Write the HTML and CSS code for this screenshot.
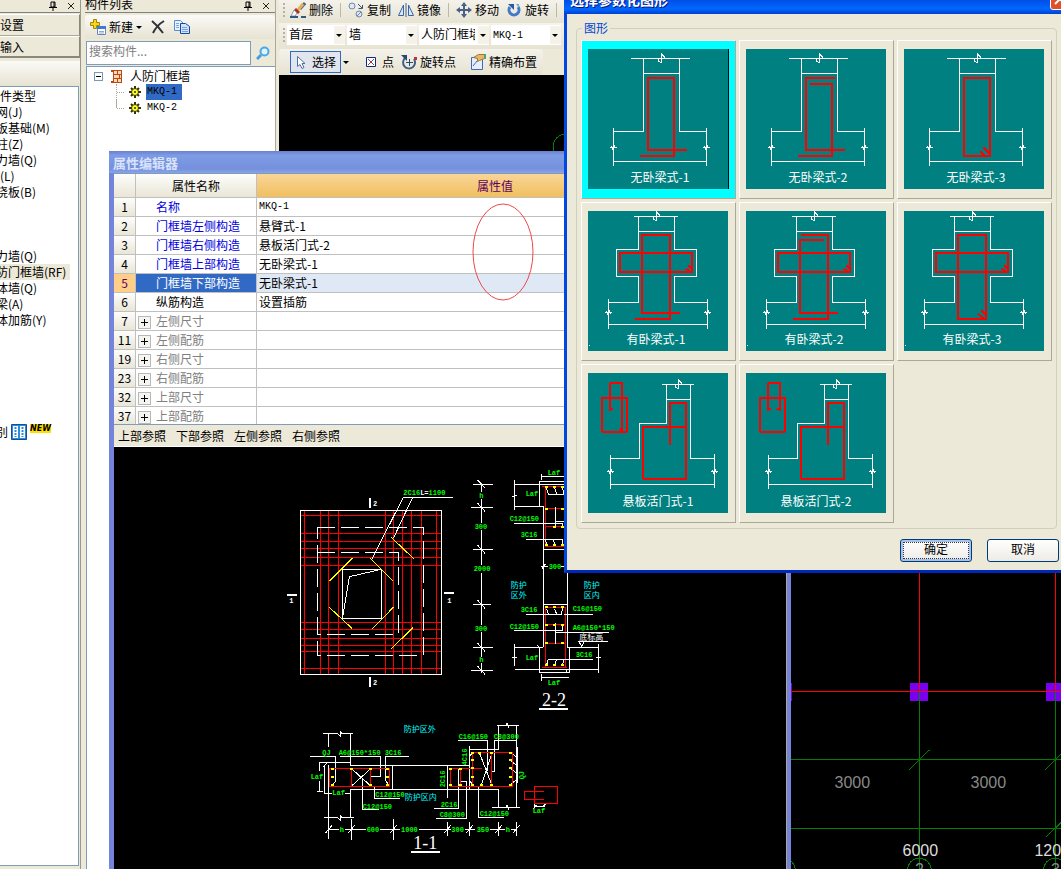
FILE: index.html
```
<!DOCTYPE html>
<html lang="zh-CN">
<head>
    <meta charset="UTF-8">
    <meta name="viewport" content="width=device-width, initial-scale=1.0">
    <title>属性编辑器</title>
    <link rel="stylesheet" href="styles.css">
</head>
<body>
    <!-- Shared symbols -->
    <svg class="defs" aria-hidden="true">
        <symbol id="pin" viewBox="0 0 8 10"><path d="M2 1H6V6H2ZM5 1V6M0 6.5H8M4 7V10" fill="none" stroke="#000"/></symbol>
        <symbol id="close" viewBox="0 0 8 8"><path d="M1 1L7 7M7 1L1 7" fill="none" stroke="#222"/></symbol>
        <symbol id="gear" viewBox="0 0 12 12">
            <path d="M6 0V12M0 6H12M2 2L10 10M10 2L2 10" stroke="#333300" stroke-width="2"/>
            <circle cx="6" cy="6" r="3.5" fill="#ffff20" stroke="#333300"/>
            <circle cx="6" cy="6" r="1" fill="#333300"/>
        </symbol>
        <!-- wall base without beam -->
        <symbol id="base-a" viewBox="0 0 420 420">
            <path class="w" d="M129 28H306M210 28V35L220 41V15L230 25V28M166 73H274M76 247H166V28M274 28V247H355M76 237V350M355 237V350M76 337H355M65 294H87M70 290L76 304M76 284L82 298M344 294H366M349 290L355 304M355 284L361 298"/>
        </symbol>
        <!-- wall base with beam -->
        <symbol id="base-b" viewBox="0 0 420 420">
            <path class="w" d="M138 16H269M195 16V23L205 29V3L215 13V16M152 61H259M61 274H152V197H86V116H152V16M259 16V116H325V197H259V274H358M61 264V353M358 264V353M61 340H358M50 304H72M55 300L61 314M61 294L67 308M347 304H369M352 300L358 314M358 294L364 308M3 403H6"/>
            <path class="r" d="M96 125H313V183H96ZM294 173L306 183M301 163L313 175"/>
        </symbol>
        <!-- hanging slab -->
        <symbol id="base-c" viewBox="0 0 420 420">
            <path class="w" d="M222 34H318M261 34V41L271 47V21L281 31V34M235 79H307M67 256H155V151H235V34M307 34V256H379M67 246V347M379 243V345M67 334H379M56 295H78M61 291L67 305M67 285L73 299M368 295H390M373 291L379 305M379 285L385 299"/>
            <path class="r" d="M42 75H117V176H42ZM165 161H295V317H165ZM246 216V89H295V161M66 30V111L75 107"/>
        </symbol>
    </svg>

    <div class="app">
        <!-- Component types -->
        <aside class="types">
            <div class="pane-title">
                <svg class="pin"><use href="#pin"/></svg>
                <svg class="close"><use href="#close"/></svg>
            </div>
            <button class="nav-btn">设置</button>
            <button class="nav-btn nav-btn-last">输入</button>
            <div class="types-bar"></div>
            <ul class="type-list">
                <li class="root">件类型</li>
                <li>网(J)</li>
                <li>板基础(M)</li>
                <li>柱(Z)</li>
                <li>力墙(Q)</li>
                <li class="root">(L)</li>
                <li>浇板(B)</li>
                <li></li>
                <li></li>
                <li></li>
                <li>力墙(Q)</li>
                <li><span class="current">防门框墙(RF)</span></li>
                <li>体墙(Q)</li>
                <li>梁(A)</li>
                <li>体加筋(Y)</li>
                <li></li>
                <li></li>
                <li></li>
                <li></li>
                <li></li>
                <li></li>
                <li class="new-row">
                    别
                    <svg width="16" height="16" viewBox="0 0 16 16"><path fill="#2a8ae0" stroke="#14508c" d="M.5.5h15v15H.5z"/><path fill="#fff" d="M2 2h5v12H2zM9 2h5v12H9z"/><path stroke="#2a8ae0" stroke-width="2" d="M4.500 3v10M11.500 3v10" stroke-dasharray="2 1"/></svg>
                    <b>NEW</b>
                </li>
            </ul>
        </aside>

        <!-- Component list -->
        <aside class="components">
            <div class="pane-title">
                <span>构件列表</span>
                <svg class="pin"><use href="#pin"/></svg>
                <svg class="close"><use href="#close"/></svg>
            </div>
            <div class="list-bar">
                <button class="tool">
                    <svg width="16" height="16" viewBox="0 0 16 16"><path fill="#f7d51d" stroke="#a88600" d="M3.500.5h3v3h3v3h-3v3h-3v-3h-3v-3h3z"/><path fill="#fff" stroke="#6a86b8" d="M7.500 7.500h8v8h-8z"/><path fill="#3c7ae0" d="M7 7h9v3H7z"/><path stroke="#8ea8d0" d="M9 12.500h5M9 14h5"/></svg>
                    新建
                    <i class="arrow"></i>
                </button>
                <button class="tool" aria-label="删除"><svg width="14" height="14" viewBox="0 0 14 14"><path fill="none" stroke="#303038" stroke-width="2" d="M1 1Q7 6 12 13M13 1Q6 5 2 13"/></svg></button>
                <button class="tool" aria-label="复制"><svg width="16" height="14" viewBox="0 0 16 14"><path fill="#e8f2ff" stroke="#5c8cd0" d="M.5.5h6l3 3v7h-9z"/><path fill="#cfe2ff" stroke="#1848a0" d="M6.500 3.500h5l4 3v7h-9z"/><path stroke="#7aa4e0" d="M2 3.500h3M2 5.500h3M2 7.500h3M8 7.500h5M8 9.500h6M8 11.500h6"/></svg></button>
            </div>
            <div class="search">
                <input type="text" placeholder="搜索构件..." aria-label="搜索构件">
                <button aria-label="搜索"><svg width="14" height="14" viewBox="0 0 14 14"><circle cx="8.500" cy="5.500" r="4" fill="#dff3ff" stroke="#4aa8e8" stroke-width="2"/><path stroke="#4a9ce0" stroke-width="3" d="M5 9L1 13"/></svg></button>
            </div>
            <div class="tree">
                <div class="tree-root">
                    <span class="minus"></span>
                    <svg width="11" height="13" viewBox="0 0 11 13"><path fill="#b8481c" d="M0 0h11v13H0v-2h2V2H0z"/><path fill="#ffd8b0" d="M3 1h3v3H3zM7 1h3v3H7zM3 5h5v3H3zM9 5h1v3H9zM3 9h3v3H3zM7 9h3v3H7z"/></svg>
                    人防门框墙
                </div>
                <ul>
                    <li><svg width="12" height="12"><use href="#gear"/></svg><span class="code selected">MKQ-1</span></li>
                    <li><svg width="12" height="12"><use href="#gear"/></svg><span class="code">MKQ-2</span></li>
                </ul>
            </div>
        </aside>

        <!-- Toolbars and model canvas -->
        <main class="main">
            <div class="toolbar">
                <i class="grip"></i>
                <button class="tool"><svg width="16" height="16" viewBox="0 0 16 16"><path stroke="#486898" stroke-width="3" d="M10 7L15 1"/><path stroke="#e8b050" stroke-width="3" d="M8 8L13 2"/><path fill="#b03028" d="M6 6l4 4-2 2-4-4z"/><path fill="#fff" stroke="#8898a8" d="M4 8l3 3-2 3H1z"/><path fill="#305880" d="M0 14h8v2H0zM11 14h5v2h-5z"/></svg>删除</button>
                <i class="sep"></i>
                <button class="tool"><svg width="16" height="16" viewBox="0 0 16 16"><circle cx="4" cy="4" r="3" fill="#dfe8f6" stroke="#7088a8"/><circle cx="11" cy="12" r="3" fill="#dfe8f6" stroke="#7088a8"/><path stroke="#7088a8" d="M9 14l4-4"/><path fill="none" stroke="#405070" d="M10 2l4 4M14.500 3v3.500h-4"/></svg>复制</button>
                <button class="tool"><svg width="16" height="16" viewBox="0 0 16 16"><path fill="#dbe8fa" stroke="#3c64a0" d="M5.500 3v10.500H.5zM10.500 3v10.500h5zM8 1v14"/></svg>镜像</button>
                <i class="sep"></i>
                <button class="tool"><svg width="16" height="16" viewBox="0 0 16 16"><path fill="none" stroke="#486088" stroke-width="2" d="M8 2v12M2 8h12"/><path fill="#486088" d="M8 0l3 4H5zM8 16l3-4H5zM0 8l4-3v6zM16 8l-4-3v6z"/></svg>移动</button>
                <button class="tool"><svg width="16" height="16" viewBox="0 0 16 16"><path fill="none" stroke="#4478c8" stroke-width="3" d="M4 5A5 5 0 1 0 12 5"/><path fill="#2858a8" d="M2 2h6v6z"/><path fill="#78a8e0" d="M10 2h3v4z"/></svg>旋转</button>
                <i class="sep"></i>
            </div>
            <div class="toolbar combos">
                <i class="grip"></i>
                <label class="combo"><select aria-label="楼层"><option>首层</option></select></label>
                <label class="combo wide"><select aria-label="构件大类"><option>墙</option></select></label>
                <label class="combo wide"><select aria-label="构件类型"><option>人防门框墙</option></select></label>
                <label class="combo wide"><select class="code" aria-label="构件"><option>MKQ-1</option></select></label>
            </div>
            <div class="toolbar draw-bar">
                <i class="grip"></i>
                <div class="split">
                    <button class="tool pressed"><svg width="16" height="16" viewBox="0 0 16 16"><path fill="#fff" stroke="#5070a0" d="M4.500 2.500v10l2.500-2 2 4 2-1-2-4h3z"/></svg>选择</button>
                    <i class="arrow"></i>
                </div>
                <i class="sep"></i>
                <button class="tool"><svg width="16" height="16" viewBox="0 0 16 16"><path fill="#fff" stroke="#182878" d="M3.500 3.500h9v9h-9z"/><path stroke="#3858b0" d="M5 5l6 6M11 5l-6 6"/><path fill="#e02020" d="M7 7h2v2H7z"/></svg>点</button>
                <button class="tool"><svg width="16" height="16" viewBox="0 0 16 16"><path fill="none" stroke="#406088" stroke-width="2" d="M4 4A6 6 0 1 0 13 5"/><path fill="#284870" d="M0 1h6v6z"/><path stroke="#284870" d="M5 8.500h7M8.500 5v7"/><path fill="#c03040" d="M13 3h3v3h-3z"/></svg>旋转点</button>
                <i class="sep"></i>
                <button class="tool"><svg width="16" height="16" viewBox="0 0 16 16"><path fill="#e6eefc" stroke="#4468b8" d="M1.500 3.500h11v12h-11z"/><path stroke="#4468b8" d="M3 12l4-5"/><path fill="#e8b860" stroke="#987838" d="M3.500 3.500l5-3h6v4l-5 2-2 1v-3z"/><path fill="#58a070" d="M14 0h2v5h-2z"/></svg>精确布置</button>
            </div>
            <div class="canvas">
                <svg class="model" width="100%" height="100%">
                    <circle cx="287" cy="72" r="13" class="gl"/>
                    <svg x="491" y="495" width="291" height="299" viewBox="0 0 873 897">
                        <path fill="#7a00f0" d="M50 339h16v54H50zM420 339h54v54h-54zM828 339h54v54h-54z"/>
                        <path class="red" d="M60 364H873M448 0V364M856 0V364"/>
                        <path class="gl" d="M448 364V897M856 364V897M60 568H873M60 775H873M417 600L478 540M825 600L886 540M828 801L886 745"/>
                        <circle class="gl" cx="448" cy="901" r="36"/><circle class="gl" cx="856" cy="901" r="36"/><circle class="gl" cx="40" cy="901" r="36"/>
                        <g class="dim">
                            <text class="gray" x="247" y="654">3000</text>
                            <text class="gray" x="655" y="654">3000</text>
                            <text x="451" y="858">6000</text>
                            <text x="860" y="858">12000</text>
                            <text class="gray" x="448" y="916">2</text>
                            <text class="gray" x="856" y="916">3</text>
                        </g>
                    </svg>
                </svg>
            </div>
        </main>
    </div>

    <!-- Property editor window -->
    <section class="props">
        <h2>属性编辑器</h2>
        <div class="props-body">
            <div class="table-wrap">
                <table>
                    <colgroup><col class="col-no"><col class="col-name"><col></colgroup>
                    <thead>
                        <tr><th></th><th>属性名称</th><th class="hot">属性值</th></tr>
                    </thead>
                    <tbody>
                        <tr><th>1</th><td class="key">名称</td><td class="code">MKQ-1</td></tr>
                        <tr><th>2</th><td class="key">门框墙左侧构造</td><td>悬臂式-1</td></tr>
                        <tr><th>3</th><td class="key">门框墙右侧构造</td><td>悬板活门式-2</td></tr>
                        <tr><th>4</th><td class="key">门框墙上部构造</td><td>无卧梁式-1</td></tr>
                        <tr class="active"><th>5</th><td class="key">门框墙下部构造</td><td>无卧梁式-1</td></tr>
                        <tr><th>6</th><td class="key plain">纵筋构造</td><td>设置插筋</td></tr>
                        <tr><th>7</th><td class="group"><button aria-label="展开"></button>左侧尺寸</td><td></td></tr>
                        <tr><th>11</th><td class="group"><button aria-label="展开"></button>左侧配筋</td><td></td></tr>
                        <tr><th>19</th><td class="group"><button aria-label="展开"></button>右侧尺寸</td><td></td></tr>
                        <tr><th>23</th><td class="group"><button aria-label="展开"></button>右侧配筋</td><td></td></tr>
                        <tr><th>32</th><td class="group"><button aria-label="展开"></button>上部尺寸</td><td></td></tr>
                        <tr><th>37</th><td class="group"><button aria-label="展开"></button>上部配筋</td><td></td></tr>
                    </tbody>
                </table>
                <svg class="mark" width="62" height="98"><ellipse cx="31" cy="49" rx="30" ry="48"/></svg>
            </div>
            <nav class="refs">
                <a href="#">上部参照</a>
                <a href="#">下部参照</a>
                <a href="#">左侧参照</a>
                <a href="#">右侧参照</a>
            </nav>
            <div class="drawing">
                <svg width="100%" height="100%">
                    <!-- elevation -->
                    <svg x="166" y="33" width="180" height="220" viewBox="0 0 540 660">
                        <path class="red" d="M61 106H484M61 160H484M61 184H484M61 205H484M61 232H484M61 256H484M61 427H484M61 448H484M61 475H484M61 496H484M61 514H484M61 565H484M73 92V583M121 92V583M145 92V583M175 92V583M316 92V583M340 92V583M367 92V583M394 92V583M424 92V583M469 92V583"/>
                        <path class="w" stroke-dasharray="54 18" d="M112 142H430V526H112ZM112 217H355V463H112"/>
                        <path class="w" d="M61 92H484V583H61ZM187 268H304V415H187ZM304 268L208 290L188 412M518 52H370L274 240M398 52L340 175"/>
                        <path class="y" d="M148 304L217 235M271 235L340 304M334 172L403 238M148 382L217 446M277 446L340 382M334 506L400 442"/>
                        <path class="bar" d="M270 55V83M270 592V620M22 345H50M492 339H522"/>
                        <text class="t" x="370" y="45">2C16<tspan class="wt">L=</tspan>1100</text>
                        <text class="t wt" x="279" y="78">2</text><text class="t wt" x="279" y="614">2</text>
                        <text class="t wt" x="28" y="369">1</text><text class="t wt" x="502" y="369">1</text>
                    </svg>
                    <!-- section 2-2 -->
                    <svg x="346" y="13" width="180" height="260" viewBox="0 0 540 780">
                        <path class="w" d="M65 73V95M65 118V190M65 210V316M65 338V494M65 516V590M65 610V640M40 73H98M34 142H98M40 268H98M40 433H92M40 562H98M34 631H98M53 60L75 84M53 130L75 154M53 256L75 280M53 421L75 445M53 550L75 574M53 619L75 643"/>
                        <path class="w" d="M164 60V150M156 110L172 106M164 73H330M250 139H164M238 65H330M238 65V139M245 42V60M245 49H330M250 139V562M322 139V562M250 268H322M250 433H322M244 320H264M304 320H322M245 328L256 312M164 552V618M156 592H172M164 562H250M164 628H416M238 562V638H328V562M322 562H416M416 552V640M408 592H424M245 642V662M245 652H328M244 638H320V628M354 544H444M356 544L365 558L374 544M232 556L240 564"/>
                        <path class="red" d="M256 79H315V260H256ZM256 145H315M256 200H315M246 79H315M256 442H315V622H256ZM256 493H315M256 550H315M246 622H320"/>
                        <path class="w" d="M286 142V200M286 184H315M162 190H306V200M198 238H306V254M264 103H312M260 85L265 103M284 85L290 103M308 85L312 103M286 490V552M162 511H306V496M286 517H446M198 463H304L308 444M312 463H398M260 446L265 463M284 446L290 463M264 598H398M260 614L265 598M284 614L290 598M308 614L312 598M260 252L256 240M284 252L280 240"/>
                        <path class="dots" d="M256 82h9M280 82h9M304 82h9M256 146h9M304 146h9M280 200h9M304 200h9M256 254h9M280 254h9M304 254h9M256 442h9M280 442h9M304 442h9M256 496h9M280 496h9M304 496h9M256 550h9M304 550h9M256 614h9M280 614h9M304 614h9"/>
                        <text class="t" x="58" y="114">h</text><text class="t" x="44" y="207">300</text><text class="t" x="41" y="333">2000</text><text class="t" x="44" y="513">300</text><text class="t" x="58" y="606">h</text>
                        <text class="t" x="263" y="45">Laf</text><text class="t" x="197" y="108">Laf</text><text class="t" x="149" y="183">C12@150</text><text class="t" x="182" y="231">3C16</text><text class="t" x="266" y="327">300</text>
                        <text class="t" x="182" y="456">3C16</text><text class="t" x="149" y="507">C12@150</text><text class="t" x="338" y="453">C16@150</text><text class="t" x="338" y="510">A6@150*150</text><text class="t" x="347" y="591">3C16</text><text class="t" x="197" y="600">Laf</text><text class="t" x="263" y="675">Laf</text>
                        <text class="zone" x="152" y="385">防护</text><text class="zone" x="152" y="415">区外</text><text class="zone" x="371" y="385">防护</text><text class="zone" x="371" y="413">区内</text><text class="zone wt" x="358" y="540">底标高</text>
                        <text class="sec" x="282" y="738">2-2</text>
                        <path class="bar" d="M237 747H324"/>
                    </svg>
                    <!-- section 1-1 -->
                    <svg x="176" y="263" width="290" height="159" viewBox="0 0 870 477">
                        <path class="w" d="M99 70H141L150 77V63L156 70H189M116 70V110M181 70V166H538M116 166V386M102 322H141L150 329V315L156 322H192M181 322V238H625V292M307 166V238M472 166V264M538 108V238M538 118H625V46M621 46H650V38L656 54V46H687M679 46V292M606 292H650V284L656 300V292H690M88 157V184M88 212V244M82 244H98M88 157H181M104 166V250H126M166 250H181M181 150V162M100 172L110 160M682 110V220"/>
                        <path class="w" d="M61 139H137V214L124 226M150 139H271V199H244M356 139H286V210L294 222M253 230V265H330M217 205V298H267M187 178L240 226M240 178L187 226M505 178V295H432M512 214H529V325H438M504 91H592V184M680 91H613V184H604M568 128L606 226M606 128L574 226M565 230V322H642M547 128L538 140M547 224L538 210M662 128L680 142M662 152L680 166M662 176L680 190M662 224L680 208"/>
                        <path class="red" d="M118 175H298V229H118ZM184 175V229M242 175V229M482 175H576M482 175V229H668V127H547V229M512 175V229M604 127V229M703 244H762M762 268H703V244M733 229H802V280H733Z"/>
                        <path class="dots" d="M122 176h9M122 200h9M122 224h9M181 176h9M238 176h9M238 224h9M289 176h9M289 200h9M289 224h9M478 176h9M478 224h9M508 176h9M508 224h9M544 128h9M544 149h9M544 173h9M544 200h9M544 224h9M565 128h9M601 128h9M658 128h9M658 149h9M658 173h9M658 200h9M658 224h9M571 224h9M601 224h9"/>
                        <path class="w" d="M116 358H148M164 358H228M270 358H330M386 358H482M524 358H556M600 358H646M662 358H679M184 328V390M310 328V390M472 336V378M538 336V378M625 336V378M679 336V378M106 370L126 346M174 370L194 346M300 370L320 346M464 368L482 346M530 368L548 346M617 368L635 346M670 368L688 346M733 282V290H765M730 296L740 284M758 290L766 282"/>
                        <text class="t" x="97" y="134">QJ</text><text class="t" x="146" y="134">A6@150*150</text><text class="t" x="284" y="134">3C16</text><text class="t" x="62" y="206">Laf</text><text class="t" x="127" y="254">Laf</text><text class="t" x="256" y="260">C12@150</text><text class="t" x="218" y="296">C12@150</text>
                        <text class="t" x="452" y="290">2C16</text><text class="t" x="449" y="320">C8@300</text><text class="t" x="569" y="317">C12@150</text><text class="t" x="506" y="86">C16@150</text><text class="t" x="611" y="86">C8@300</text><text class="t" x="728" y="308">Laf</text>
                        <text class="t" transform="translate(465 232) rotate(-90)">2C16</text><text class="t" transform="translate(530 166) rotate(-90)">4C16</text><text class="t" transform="translate(703 208) rotate(-90)">QJ</text>
                        <text class="t" x="149" y="365">h</text><text class="t" x="230" y="365">600</text><text class="t" x="333" y="365">1000</text><text class="t" x="484" y="365">300</text><text class="t" x="560" y="365">350</text><text class="t" x="647" y="365">h</text>
                        <text class="zone" x="341" y="67">防护区外</text><text class="zone" x="344" y="271">防护区内</text>
                        <text class="sec" x="406" y="418">1-1</text>
                        <path class="bar" d="M363 426H450"/>
                    </svg>
                </svg>
            </div>
        </div>
    </section>

    <!-- Parametric shape dialog -->
    <section class="dialog" role="dialog" aria-label="选择参数化图形">
        <header>
            <h2>选择参数化图形</h2>
            <button aria-label="关闭"><svg width="12" height="12" viewBox="0 0 12 12"><path stroke="#fff" stroke-width="2" d="M1 1L11 11M11 1L1 11"/></svg></button>
        </header>
        <div class="dialog-body">
            <fieldset>
                <legend>图形</legend>
                <div class="shapes">
                    <button class="shape picked"><svg viewBox="0 0 420 420"><use href="#base-a"/><path class="r" d="M297 303H180V87H258V321H156"/><text x="216" y="399">无卧梁式-1</text></svg></button>
                    <button class="shape"><svg viewBox="0 0 420 420"><use href="#base-a"/><path class="r" d="M267 87H180V303H297M192 105H258V321H156"/><text x="216" y="399">无卧梁式-2</text></svg></button>
                    <button class="shape"><svg viewBox="0 0 420 420"><use href="#base-a"/><path class="r" d="M180 87H258V321H180ZM229 308L245 321M238 296L258 314"/><text x="216" y="399">无卧梁式-3</text></svg></button>
                    <button class="shape"><svg viewBox="0 0 420 420"><use href="#base-b"/><path class="r" d="M276 306H162V71H247V323H142"/><text x="204" y="399">有卧梁式-1</text></svg></button>
                    <button class="shape"><svg viewBox="0 0 420 420"><use href="#base-b"/><path class="r" d="M165 71H247V323H142M234 87H162V306H276"/><text x="204" y="399">有卧梁式-2</text></svg></button>
                    <button class="shape"><svg viewBox="0 0 420 420"><use href="#base-b"/><path class="r" d="M162 72H247V325H162ZM222 308L238 322M233 298L247 312"/><text x="204" y="399">有卧梁式-3</text></svg></button>
                    <button class="shape"><svg viewBox="0 0 420 420"><use href="#base-c"/><path class="r" d="M66 30H102V174L95 167"/><text x="210" y="399">悬板活门式-1</text></svg></button>
                    <button class="shape"><svg viewBox="0 0 420 420"><use href="#base-c"/><path class="r" d="M66 30H102V111L92 107"/><text x="210" y="399">悬板活门式-2</text></svg></button>
                </div>
            </fieldset>
            <div class="actions">
                <button class="xp-btn default">确定</button>
                <button class="xp-btn">取消</button>
            </div>
        </div>
    </section>
</body>
</html>
```
FILE: styles.css
```
* {
    box-sizing: border-box;
}

body {
    margin: 0;
    height: 100vh;
    overflow: hidden;
    position: relative;
    background-color: #ece9d8;
    color: #000;
    font-family: "Noto Sans CJK SC", sans-serif;
    font-size: 12px;
    line-height: 16px;
}

button, input, select {
    font: inherit;
    color: inherit;
    margin: 0;
    padding: 0;
    border: none;
    background: none;
}

ul {
    list-style: none;
    margin: 0;
    padding: 0;
}

svg {
    display: block;
    flex: none;
}

.defs {
    position: absolute;
    width: 0;
    height: 0;
}

.code {
    font-family: "Liberation Mono", monospace;
    font-size: 10px;
}

.app {
    display: flex;
    height: 100%;
}

/* Side panes */
.types {
    width: 81px;
    flex: none;
    display: flex;
    flex-direction: column;
    border-right: 1px solid #9a988c;
    overflow: hidden;
}

.components {
    width: 191px;
    flex: none;
    margin-left: 4px;
    display: flex;
    flex-direction: column;
    border-right: 1px solid #aca899;
}

.pane-title {
    height: 13px;
    flex: none;
    display: flex;
    align-items: center;
    justify-content: flex-end;
    gap: 10px;
    padding: 0 5px 0 0;
    border-bottom: 1px solid #808080;
}

.pane-title span {
    margin: -4px auto 0 0;
}

.pin {
    width: 8px;
    height: 10px;
}

.close {
    width: 8px;
    height: 8px;
}

.nav-btn {
    height: 22px;
    flex: none;
    margin-top: 1px;
    text-align: left;
    background-color: #ece9d8;
    border-top: 1px solid #fff;
    border-right: 1px solid #8a887c;
    border-bottom: 1px solid #aca899;
}

.nav-btn-last {
    margin-top: 0;
    border-bottom: 2px solid #8a887c;
}

.types-bar {
    height: 25px;
    flex: none;
    margin-top: 3px;
    background: linear-gradient(#fbfaf7, #e6e3d2);
}

.type-list {
    flex: 1;
    margin: 0 1px 3px -4px;
    padding-top: 1px;
    background-color: #fff;
    border-top: 1px solid #7f9db9;
    border-right: 1px solid #7f9db9;
    border-bottom: 1px solid #7f9db9;
}

.type-list li {
    height: 16px;
    white-space: nowrap;
}

.type-list .root {
    padding-left: 4px;
}

.current {
    display: inline-block;
    padding-right: 4px;
    background-color: #ece9d8;
}

.type-list .new-row {
    display: flex;
    align-items: center;
    gap: 3px;
}

.new-row b {
    align-self: flex-start;
    font-family: "DejaVu Sans", sans-serif;
    font-size: 8px;
    font-style: italic;
    line-height: 9px;
    background-color: #ffe000;
}

.list-bar {
    height: 24px;
    flex: none;
    display: flex;
    align-items: center;
    gap: 9px;
    margin-top: 2px;
    padding-left: 5px;
    border-radius: 3px;
    background: linear-gradient(#fbfaf7, #e6e3d2);
}

.tool {
    display: flex;
    align-items: center;
    gap: 3px;
    white-space: nowrap;
}

.arrow {
    border: 3px solid transparent;
    border-top-color: #000;
    border-bottom: none;
}

.search {
    display: flex;
    flex: none;
    height: 24px;
    margin: 2px 0 1px 1px;
}

.search input {
    flex: 1;
    min-width: 0;
    padding: 0 2px 4px;
    background-color: #fff;
    border: 1px solid #7f9db9;
}

.search input::placeholder {
    color: #808080;
}

.search button {
    width: 24px;
    display: grid;
    place-items: center;
}

.tree {
    flex: 1;
    margin-left: 1px;
    padding: 1px 0 0 7px;
    background-color: #fff;
    border: solid #7f9db9;
    border-width: 1px 0 0 1px;
}

.tree-root {
    display: flex;
    align-items: center;
    gap: 8px;
}

.minus {
    width: 9px;
    height: 9px;
    display: grid;
    place-items: center;
    border: 1px solid #7898b5;
}

.minus::before {
    content: "";
    width: 5px;
    height: 1px;
    background-color: #000;
}

.tree ul {
    margin-left: 22px;
}

.tree li {
    display: flex;
    align-items: center;
    gap: 5px;
    border-left: 1px dotted #aca899;
}

.tree li:last-child {
    border-image: linear-gradient(#aca899 50%, transparent 50%) 1;
}

.tree li::before {
    content: "";
    width: 7px;
    border-top: 1px dotted #aca899;
}

.tree .code {
    padding: 0 5px 0 1px;
}

.selected {
    background-color: #316ac5;
}

/* Toolbars */
.main {
    flex: 1;
    min-width: 0;
    display: flex;
    flex-direction: column;
    padding-left: 3px;
}

.toolbar {
    display: flex;
    align-items: center;
    flex: none;
    gap: 7px;
    height: 23px;
    padding: 0 4px 3px;
    background: linear-gradient(#f4f2ea, #e6e3d2);
}

.grip {
    width: 2px;
    height: 15px;
    margin-right: -2px;
    background: repeating-linear-gradient(#b5b2a2 0 2px, transparent 2px 4px);
}

.sep {
    width: 1px;
    height: 14px;
    background-color: #bbb8a8;
}

.combos {
    gap: 2px;
    height: 26px;
    padding: 0 4px 2px;
}

.combo {
    position: relative;
    width: 58px;
    height: 20px;
    background-color: #fff;
}

.combo.wide {
    width: 70px;
}

.combos .grip {
    margin-right: 0;
}

.combo select {
    appearance: none;
    width: 100%;
    height: 20px;
    padding: 0 14px 2px 2px;
    overflow: hidden;
    text-overflow: clip;
}

/* drop-down arrow area */
.combo::after {
    content: "";
    position: absolute;
    right: 0;
    top: 1px;
    width: 11px;
    height: 18px;
    background: conic-gradient(from -45deg at 50% 100%, #000 90deg, transparent 0) center / 6px 3px no-repeat, #f4f2e9;
    clip-path: none;
    pointer-events: none;
}

.combo::after {
    background: #f4f2e9;
}

.combo::before {
    content: "";
    position: absolute;
    z-index: 1;
    right: 3px;
    top: 9px;
    border: 3px solid transparent;
    border-top-color: #000;
    border-bottom: none;
    pointer-events: none;
}

.draw-bar {
    height: 26px;
    padding: 0 6px;
    width: 264px;
    border-radius: 3px;
}

.split {
    display: flex;
    align-items: center;
    gap: 2px;
}

.pressed {
    height: 22px;
    padding: 0 4px 0 2px;
    background-color: #e1e6ee;
    border: 1px solid #316ac5;
}

.canvas {
    flex: 1;
    min-height: 0;
    background-color: #000;
}

/* CAD line work */
.w, .r, .red, .y, .gl, .bar, .dots {
    fill: none;
    stroke-width: 3;
    shape-rendering: crispEdges;
}

.w {
    stroke: #fff;
}

.r {
    stroke: #f00;
    stroke-width: 6;
    stroke-linejoin: round;
}

.red {
    stroke: #f00;
}

.y {
    stroke: #ff0;
}

.gl {
    stroke: #008000;
}

.model > .gl {
    stroke-width: 1;
}

.bar {
    stroke: #fff;
    stroke-width: 6;
}

.dots {
    stroke: #ff0;
    stroke-width: 6;
}

.dim text {
    fill: #ddd;
    font-family: "Liberation Sans", sans-serif;
    font-size: 48px;
    text-anchor: middle;
}

.dim .gray {
    fill: #888;
}

.t {
    fill: #0f0;
    font-family: "Liberation Mono", monospace;
    font-size: 21px;
    font-weight: bold;
}

.zone {
    fill: #0ff;
    font-size: 24px;
}

.wt {
    fill: #fff;
}

.sec {
    fill: #fff;
    font-family: "Liberation Serif", serif;
    font-size: 54px;
    text-anchor: middle;
}

/* Property editor */
.props {
    position: absolute;
    left: 109px;
    top: 151px;
    bottom: 0;
    width: 682px;
    display: flex;
    flex-direction: column;
    padding: 0 4px 0 5px;
    background-color: #7384da;
}

.props h2 {
    flex: none;
    height: 22px;
    margin: 0 -4px 0 -5px;
    padding: 2px 4px;
    font-size: 13px;
    line-height: 19px;
    color: #d8e2fa;
    background: linear-gradient(#6c80cc, #7e9ce6 20%, #7590dc 80%, #88a4ea);
}

.props-body {
    flex: 1;
    min-height: 0;
    display: flex;
    flex-direction: column;
    background-color: #ece9d8;
}

.table-wrap {
    position: relative;
    flex: none;
    height: 252px;
    overflow: hidden;
    padding-right: 53px;
    background-color: #fff;
    border-top: 1px solid #7f9db9;
    border-bottom: 1px solid #7f9db9;
}

.table-wrap table {
    width: 100%;
    table-layout: fixed;
    border-collapse: separate;
    border-spacing: 0;
}

.col-no {
    width: 22px;
}

.col-name {
    width: 121px;
}

.table-wrap th, .table-wrap td {
    height: 19px;
    padding: 0 2px;
    line-height: 16px;
    font-weight: normal;
    text-align: left;
    white-space: nowrap;
    border-right: 1px solid #c0c0c0;
    border-bottom: 1px solid #c0c0c0;
}

.table-wrap th {
    padding: 0;
    text-align: center;
    background: linear-gradient(#fdfdfb, #e9e6d6);
}

.table-wrap thead th {
    height: 24px;
}

.table-wrap thead .hot {
    color: #600060;
    background: linear-gradient(#f9d597, #f0bf5e);
}

.table-wrap .key {
    padding-left: 20px;
    color: #0000e0;
}

.table-wrap .plain {
    color: #000;
}

.table-wrap .active th {
    color: #600060;
    background: #ffcf88;
}

.table-wrap .active td {
    background-color: #dfe8f5;
}

.table-wrap .active .key {
    color: #fff;
    background-color: #316ac5;
}

.table-wrap .group {
    color: #808080;
}

.group button {
    width: 13px;
    height: 13px;
    margin-right: 5px;
    vertical-align: middle;
    border: 1px solid #b8b8b8;
    background:
        linear-gradient(#000, #000) center / 7px 1px no-repeat,
        linear-gradient(#000, #000) center / 1px 7px no-repeat,
        #f4f4f0;
}

.mark {
    position: absolute;
    left: 358px;
    top: 29px;
}

.mark ellipse {
    fill: none;
    stroke: #f04848;
}

.refs {
    flex: none;
    height: 22px;
    display: flex;
    align-items: center;
    gap: 10px;
    padding: 0 4px;
    border-bottom: 1px solid #fff;
}

.refs a {
    color: #000;
    text-decoration: none;
}

.drawing {
    flex: 1;
    min-height: 0;
    background-color: #000;
    border-right: 1px solid #aca899;
}

/* Shape dialog */
.dialog {
    position: absolute;
    left: 564px;
    top: -12px;
    width: 502px;
    background-color: #ece9d8;
    border: solid #0048e0;
    border-width: 0 3px 3px;
    border-bottom-color: #0028b8;
}

.dialog header {
    height: 26px;
    display: flex;
    align-items: center;
    justify-content: space-between;
    margin: 0 -3px;
    padding: 0 0 4px 6px;
    background: linear-gradient(#0058ee, #0050e8 50%, #0068ff 80%, #0040d0);
}

.dialog h2 {
    margin: 0;
    font-size: 14px;
    color: #fff;
    text-shadow: 1px 1px #0a1883;
}

.dialog header button {
    width: 16px;
    height: 21px;
    padding-left: 3px;
    background-color: #e0502c;
    border: 1px solid #fff;
    border-radius: 3px;
}

.dialog-body {
    padding: 7px 6px 8px 9px;
}

.dialog fieldset {
    margin: 0;
    padding: 5px 4px;
    min-width: 0;
    border: 1px solid #d0d0bf;
    border-radius: 4px;
}

.dialog legend {
    margin-left: 1px;
    padding: 0 2px;
    line-height: 14px;
    color: #0046d5;
}

.shapes {
    display: grid;
    grid-template-columns: repeat(3, 1fr);
    gap: 3px;
}

.shape {
    padding: 8px 7px 9px 6px;
    border: 1px solid #fff;
    border-right-color: #aca899;
    border-bottom-color: #aca899;
}

.shape svg {
    width: 100%;
    background-color: #008080;
}

.shape text {
    fill: #fff;
    font-size: 36px;
    text-anchor: middle;
}

.picked {
    background-color: #0ff;
}

.picked svg {
    box-shadow: 1px 0 #000;
}

.actions {
    display: flex;
    justify-content: flex-end;
    gap: 15px;
    margin-top: 10px;
    margin-right: -2px;
}

.xp-btn {
    width: 72px;
    height: 23px;
    padding-bottom: 3px;
    background: linear-gradient(#fff, #ecebe5);
    border: 1px solid #003c74;
    border-radius: 3px;
}

.default {
    outline: 1px dotted #333;
    outline-offset: -4px;
    box-shadow: inset 0 0 0 2px #a8c0f0;
}
```
